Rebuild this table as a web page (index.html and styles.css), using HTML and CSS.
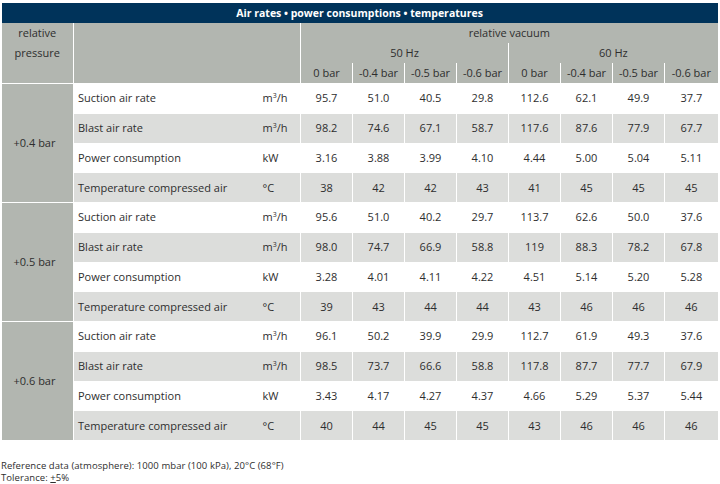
FILE: index.html
```html
<!DOCTYPE html>
<html lang="en">
<head>
<meta charset="utf-8">
<title>Air rates • power consumptions • temperatures</title>
<link rel="stylesheet" href="styles.css">
</head>
<body>
<div class="page">
<table class="data">
  <colgroup>
    <col class="c-press">
    <col class="c-label">
    <col class="c-unit">
    <col class="c-val"><col class="c-val"><col class="c-val"><col class="c-val">
    <col class="c-val"><col class="c-val"><col class="c-val"><col class="c-last">
  </colgroup>
  <thead>
    <tr class="title-row"><th colspan="11" class="title">Air rates • power consumptions • temperatures</th></tr>
    <tr class="h-row"><th rowspan="3" class="press-h">relative<br>pressure</th><th rowspan="3" colspan="2" class="blank"></th><th colspan="8">relative vacuum</th></tr>
    <tr class="h-row"><th colspan="4">50 Hz</th><th colspan="4" class="sep">60 Hz</th></tr>
    <tr class="h-row sub"><th>0 bar</th><th>-0.4 bar</th><th>-0.5 bar</th><th>-0.6 bar</th><th>0 bar</th><th>-0.4 bar</th><th>-0.5 bar</th><th>-0.6 bar</th></tr>
  </thead>
  <tbody>
    <tr><td rowspan="4" class="press">+0.4 bar</td><td class="label">Suction air rate</td><td class="unit">m<sup>3</sup>/h</td><td>95.7</td><td>51.0</td><td>40.5</td><td>29.8</td><td>112.6</td><td>62.1</td><td>49.9</td><td>37.7</td></tr>
    <tr class="alt"><td class="label">Blast air rate</td><td class="unit">m<sup>3</sup>/h</td><td>98.2</td><td>74.6</td><td>67.1</td><td>58.7</td><td>117.6</td><td>87.6</td><td>77.9</td><td>67.7</td></tr>
    <tr><td class="label">Power consumption</td><td class="unit">kW</td><td>3.16</td><td>3.88</td><td>3.99</td><td>4.10</td><td>4.44</td><td>5.00</td><td>5.04</td><td>5.11</td></tr>
    <tr class="alt"><td class="label">Temperature compressed air</td><td class="unit">°C</td><td>38</td><td>42</td><td>42</td><td>43</td><td>41</td><td>45</td><td>45</td><td>45</td></tr>
  </tbody>
  <tbody>
    <tr><td rowspan="4" class="press">+0.5 bar</td><td class="label">Suction air rate</td><td class="unit">m<sup>3</sup>/h</td><td>95.6</td><td>51.0</td><td>40.2</td><td>29.7</td><td>113.7</td><td>62.6</td><td>50.0</td><td>37.6</td></tr>
    <tr class="alt"><td class="label">Blast air rate</td><td class="unit">m<sup>3</sup>/h</td><td>98.0</td><td>74.7</td><td>66.9</td><td>58.8</td><td>119</td><td>88.3</td><td>78.2</td><td>67.8</td></tr>
    <tr><td class="label">Power consumption</td><td class="unit">kW</td><td>3.28</td><td>4.01</td><td>4.11</td><td>4.22</td><td>4.51</td><td>5.14</td><td>5.20</td><td>5.28</td></tr>
    <tr class="alt"><td class="label">Temperature compressed air</td><td class="unit">°C</td><td>39</td><td>43</td><td>44</td><td>44</td><td>43</td><td>46</td><td>46</td><td>46</td></tr>
  </tbody>
  <tbody>
    <tr><td rowspan="4" class="press">+0.6 bar</td><td class="label">Suction air rate</td><td class="unit">m<sup>3</sup>/h</td><td>96.1</td><td>50.2</td><td>39.9</td><td>29.9</td><td>112.7</td><td>61.9</td><td>49.3</td><td>37.6</td></tr>
    <tr class="alt"><td class="label">Blast air rate</td><td class="unit">m<sup>3</sup>/h</td><td>98.5</td><td>73.7</td><td>66.6</td><td>58.8</td><td>117.8</td><td>87.7</td><td>77.7</td><td>67.9</td></tr>
    <tr><td class="label">Power consumption</td><td class="unit">kW</td><td>3.43</td><td>4.17</td><td>4.27</td><td>4.37</td><td>4.66</td><td>5.29</td><td>5.37</td><td>5.44</td></tr>
    <tr class="alt"><td class="label">Temperature compressed air</td><td class="unit">°C</td><td>40</td><td>44</td><td>45</td><td>45</td><td>43</td><td>46</td><td>46</td><td>46</td></tr>
  </tbody>
</table>
<div class="notes">
  <p>Reference data (atmosphere): 1000 mbar (100 kPa), 20°C (68°F)</p>
  <p>Tolerance: <span class="pm">+</span>5%</p>
</div>
</div>
</body>
</html>
```
FILE: styles.css
```css
html, body {
  margin: 0;
  padding: 0;
  background: #ffffff;
}

body {
  font-family: "Open Sans", Lato, "Liberation Sans", sans-serif;
  color: #2e2e2e;
}

.page {
  padding: 3px 0 0 1px;
}

.data {
  border-collapse: collapse;
  table-layout: fixed;
  width: 716px;
  font-size: 11px;
}

.c-press { width: 72px; }
.c-label { width: 184px; }
.c-unit { width: 43px; }
.c-val { width: 52px; }
.c-last { width: 53px; }

.data th,
.data td {
  padding: 0;
  border: 0;
  font-weight: normal;
  line-height: 14px;
}

.title {
  background: #00335a;
  color: #ffffff;
  font-weight: bold !important;
  height: 20px;
  text-align: center;
  vertical-align: middle;
  font-size: 10.5px;
}

.h-row th {
  background: #b2b6b0;
  height: 20px;
  text-align: center;
  vertical-align: middle;
}

.h-row .press-h {
  vertical-align: top;
  line-height: 20px;
  border-right: 1px solid #ffffff;
}

.h-row .blank {
  border-right: 1px solid #ffffff;
}

.h-row .sep {
  border-left: 1px solid #ffffff;
}

.h-row.sub th {
  border-left: 1px solid #ffffff;
}

.data tbody td {
  height: 28.75px;
  border-top: 1px solid #ffffff;
  border-left: 1px solid #ffffff;
  text-align: center;
  vertical-align: middle;
}

.data tbody tr.alt td {
  background: #dcdddb;
}

.data tbody td.press {
  background: #b2b6b0;
  padding-right: 6px;
}

.data tbody td.label {
  text-align: left;
  padding-left: 4px;
}

.data tbody td.unit {
  text-align: left;
  border-left: 0;
  padding-left: 5px;
}

sup {
  font-size: 7px;
  line-height: 0;
  vertical-align: 4px;
}

.notes {
  margin-top: 20px;
  font-size: 9.5px;
  letter-spacing: 0.07px;
  line-height: 12px;
}

.notes p {
  margin: 0;
}

.pm {
  text-decoration: underline;
}
```
